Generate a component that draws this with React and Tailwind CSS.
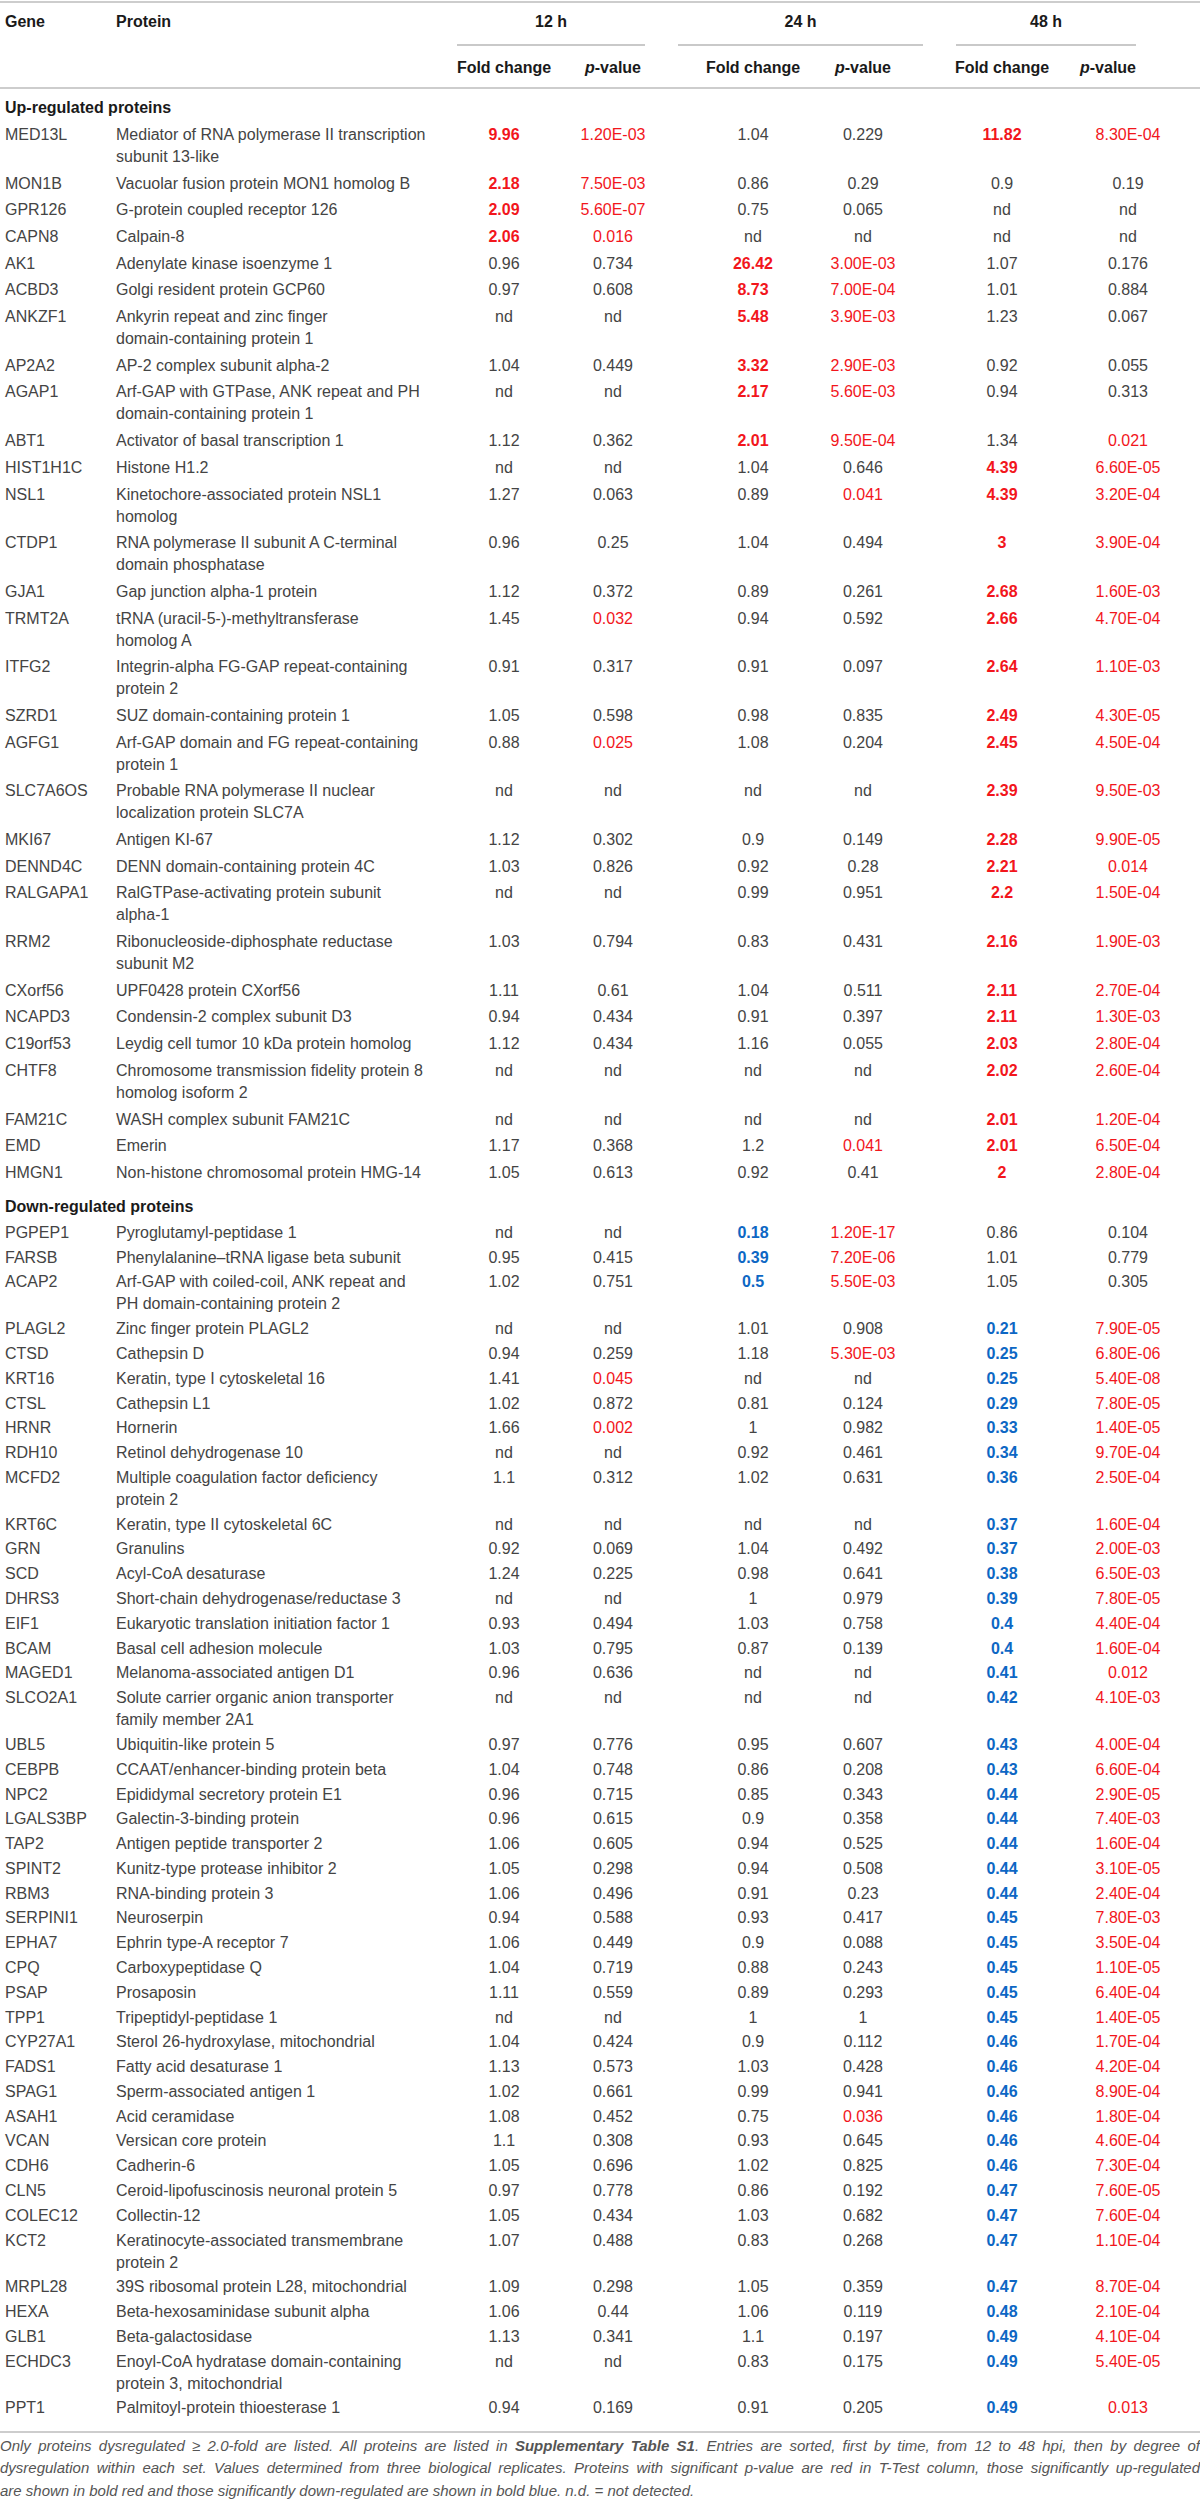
import React from 'react'

const COLS = 'grid grid-cols-[116px_334px_108px_110px_30px_110px_110px_30px_108px_144px]'

// gene|protein (~ = line break)|F12|P12|F24|P24|F48|P48
// suffix * = bold red, # = bold blue, ! = red
const UP = [
  'MED13L|Mediator of RNA polymerase II transcription~subunit 13-like|9.96*|1.20E-03!|1.04|0.229|11.82*|8.30E-04!',
  'MON1B|Vacuolar fusion protein MON1 homolog B|2.18*|7.50E-03!|0.86|0.29|0.9|0.19',
  'GPR126|G-protein coupled receptor 126|2.09*|5.60E-07!|0.75|0.065|nd|nd',
  'CAPN8|Calpain-8|2.06*|0.016!|nd|nd|nd|nd',
  'AK1|Adenylate kinase isoenzyme 1|0.96|0.734|26.42*|3.00E-03!|1.07|0.176',
  'ACBD3|Golgi resident protein GCP60|0.97|0.608|8.73*|7.00E-04!|1.01|0.884',
  'ANKZF1|Ankyrin repeat and zinc finger~domain-containing protein 1|nd|nd|5.48*|3.90E-03!|1.23|0.067',
  'AP2A2|AP-2 complex subunit alpha-2|1.04|0.449|3.32*|2.90E-03!|0.92|0.055',
  'AGAP1|Arf-GAP with GTPase, ANK repeat and PH~domain-containing protein 1|nd|nd|2.17*|5.60E-03!|0.94|0.313',
  'ABT1|Activator of basal transcription 1|1.12|0.362|2.01*|9.50E-04!|1.34|0.021!',
  'HIST1H1C|Histone H1.2|nd|nd|1.04|0.646|4.39*|6.60E-05!',
  'NSL1|Kinetochore-associated protein NSL1~homolog|1.27|0.063|0.89|0.041!|4.39*|3.20E-04!',
  'CTDP1|RNA polymerase II subunit A C-terminal~domain phosphatase|0.96|0.25|1.04|0.494|3*|3.90E-04!',
  'GJA1|Gap junction alpha-1 protein|1.12|0.372|0.89|0.261|2.68*|1.60E-03!',
  'TRMT2A|tRNA (uracil-5-)-methyltransferase~homolog A|1.45|0.032!|0.94|0.592|2.66*|4.70E-04!',
  'ITFG2|Integrin-alpha FG-GAP repeat-containing~protein 2|0.91|0.317|0.91|0.097|2.64*|1.10E-03!',
  'SZRD1|SUZ domain-containing protein 1|1.05|0.598|0.98|0.835|2.49*|4.30E-05!',
  'AGFG1|Arf-GAP domain and FG repeat-containing~protein 1|0.88|0.025!|1.08|0.204|2.45*|4.50E-04!',
  'SLC7A6OS|Probable RNA polymerase II nuclear~localization protein SLC7A|nd|nd|nd|nd|2.39*|9.50E-03!',
  'MKI67|Antigen KI-67|1.12|0.302|0.9|0.149|2.28*|9.90E-05!',
  'DENND4C|DENN domain-containing protein 4C|1.03|0.826|0.92|0.28|2.21*|0.014!',
  'RALGAPA1|RalGTPase-activating protein subunit~alpha-1|nd|nd|0.99|0.951|2.2*|1.50E-04!',
  'RRM2|Ribonucleoside-diphosphate reductase~subunit M2|1.03|0.794|0.83|0.431|2.16*|1.90E-03!',
  'CXorf56|UPF0428 protein CXorf56|1.11|0.61|1.04|0.511|2.11*|2.70E-04!',
  'NCAPD3|Condensin-2 complex subunit D3|0.94|0.434|0.91|0.397|2.11*|1.30E-03!',
  'C19orf53|Leydig cell tumor 10 kDa protein homolog|1.12|0.434|1.16|0.055|2.03*|2.80E-04!',
  'CHTF8|Chromosome transmission fidelity protein 8~homolog isoform 2|nd|nd|nd|nd|2.02*|2.60E-04!',
  'FAM21C|WASH complex subunit FAM21C|nd|nd|nd|nd|2.01*|1.20E-04!',
  'EMD|Emerin|1.17|0.368|1.2|0.041!|2.01*|6.50E-04!',
  'HMGN1|Non-histone chromosomal protein HMG-14|1.05|0.613|0.92|0.41|2*|2.80E-04!',
]

const DOWN = [
  'PGPEP1|Pyroglutamyl-peptidase 1|nd|nd|0.18#|1.20E-17!|0.86|0.104',
  'FARSB|Phenylalanine\u2013tRNA ligase beta subunit|0.95|0.415|0.39#|7.20E-06!|1.01|0.779',
  'ACAP2|Arf-GAP with coiled-coil, ANK repeat and~PH domain-containing protein 2|1.02|0.751|0.5#|5.50E-03!|1.05|0.305',
  'PLAGL2|Zinc finger protein PLAGL2|nd|nd|1.01|0.908|0.21#|7.90E-05!',
  'CTSD|Cathepsin D|0.94|0.259|1.18|5.30E-03!|0.25#|6.80E-06!',
  'KRT16|Keratin, type I cytoskeletal 16|1.41|0.045!|nd|nd|0.25#|5.40E-08!',
  'CTSL|Cathepsin L1|1.02|0.872|0.81|0.124|0.29#|7.80E-05!',
  'HRNR|Hornerin|1.66|0.002!|1|0.982|0.33#|1.40E-05!',
  'RDH10|Retinol dehydrogenase 10|nd|nd|0.92|0.461|0.34#|9.70E-04!',
  'MCFD2|Multiple coagulation factor deficiency~protein 2|1.1|0.312|1.02|0.631|0.36#|2.50E-04!',
  'KRT6C|Keratin, type II cytoskeletal 6C|nd|nd|nd|nd|0.37#|1.60E-04!',
  'GRN|Granulins|0.92|0.069|1.04|0.492|0.37#|2.00E-03!',
  'SCD|Acyl-CoA desaturase|1.24|0.225|0.98|0.641|0.38#|6.50E-03!',
  'DHRS3|Short-chain dehydrogenase/reductase 3|nd|nd|1|0.979|0.39#|7.80E-05!',
  'EIF1|Eukaryotic translation initiation factor 1|0.93|0.494|1.03|0.758|0.4#|4.40E-04!',
  'BCAM|Basal cell adhesion molecule|1.03|0.795|0.87|0.139|0.4#|1.60E-04!',
  'MAGED1|Melanoma-associated antigen D1|0.96|0.636|nd|nd|0.41#|0.012!',
  'SLCO2A1|Solute carrier organic anion transporter~family member 2A1|nd|nd|nd|nd|0.42#|4.10E-03!',
  'UBL5|Ubiquitin-like protein 5|0.97|0.776|0.95|0.607|0.43#|4.00E-04!',
  'CEBPB|CCAAT/enhancer-binding protein beta|1.04|0.748|0.86|0.208|0.43#|6.60E-04!',
  'NPC2|Epididymal secretory protein E1|0.96|0.715|0.85|0.343|0.44#|2.90E-05!',
  'LGALS3BP|Galectin-3-binding protein|0.96|0.615|0.9|0.358|0.44#|7.40E-03!',
  'TAP2|Antigen peptide transporter 2|1.06|0.605|0.94|0.525|0.44#|1.60E-04!',
  'SPINT2|Kunitz-type protease inhibitor 2|1.05|0.298|0.94|0.508|0.44#|3.10E-05!',
  'RBM3|RNA-binding protein 3|1.06|0.496|0.91|0.23|0.44#|2.40E-04!',
  'SERPINI1|Neuroserpin|0.94|0.588|0.93|0.417|0.45#|7.80E-03!',
  'EPHA7|Ephrin type-A receptor 7|1.06|0.449|0.9|0.088|0.45#|3.50E-04!',
  'CPQ|Carboxypeptidase Q|1.04|0.719|0.88|0.243|0.45#|1.10E-05!',
  'PSAP|Prosaposin|1.11|0.559|0.89|0.293|0.45#|6.40E-04!',
  'TPP1|Tripeptidyl-peptidase 1|nd|nd|1|1|0.45#|1.40E-05!',
  'CYP27A1|Sterol 26-hydroxylase, mitochondrial|1.04|0.424|0.9|0.112|0.46#|1.70E-04!',
  'FADS1|Fatty acid desaturase 1|1.13|0.573|1.03|0.428|0.46#|4.20E-04!',
  'SPAG1|Sperm-associated antigen 1|1.02|0.661|0.99|0.941|0.46#|8.90E-04!',
  'ASAH1|Acid ceramidase|1.08|0.452|0.75|0.036!|0.46#|1.80E-04!',
  'VCAN|Versican core protein|1.1|0.308|0.93|0.645|0.46#|4.60E-04!',
  'CDH6|Cadherin-6|1.05|0.696|1.02|0.825|0.46#|7.30E-04!',
  'CLN5|Ceroid-lipofuscinosis neuronal protein 5|0.97|0.778|0.86|0.192|0.47#|7.60E-05!',
  'COLEC12|Collectin-12|1.05|0.434|1.03|0.682|0.47#|7.60E-04!',
  'KCT2|Keratinocyte-associated transmembrane~protein 2|1.07|0.488|0.83|0.268|0.47#|1.10E-04!',
  'MRPL28|39S ribosomal protein L28, mitochondrial|1.09|0.298|1.05|0.359|0.47#|8.70E-04!',
  'HEXA|Beta-hexosaminidase subunit alpha|1.06|0.44|1.06|0.119|0.48#|2.10E-04!',
  'GLB1|Beta-galactosidase|1.13|0.341|1.1|0.197|0.49#|4.10E-04!',
  'ECHDC3|Enoyl-CoA hydratase domain-containing~protein 3, mitochondrial|nd|nd|0.83|0.175|0.49#|5.40E-05!',
  'PPT1|Palmitoyl-protein thioesterase 1|0.94|0.169|0.91|0.205|0.49#|0.013!',
]

function Val({ v }) {
  const mark = v.slice(-1)
  if (mark === '*') return <div className="text-center font-bold text-[#f2161c]">{v.slice(0, -1)}</div>
  if (mark === '#') return <div className="text-center font-bold text-[#0d67c4]">{v.slice(0, -1)}</div>
  if (mark === '!') return <div className="text-center text-[#f2161c]">{v.slice(0, -1)}</div>
  return <div className="text-center">{v}</div>
}

function Row({ d, pad }) {
  const [gene, protein, ...v] = d.split('|')
  return (
    <div className={`${COLS} ${pad}`}>
      <div className="pl-[5px]">{gene}</div>
      <div className="whitespace-nowrap">
        {protein.split('~').map((line, i) => (
          <div key={i}>{line}</div>
        ))}
      </div>
      <Val v={v[0]} />
      <Val v={v[1]} />
      <div />
      <Val v={v[2]} />
      <Val v={v[3]} />
      <div />
      <Val v={v[4]} />
      <Val v={v[5]} />
    </div>
  )
}

const PV = () => (
  <>
    <i>p</i>-value
  </>
)

export default function App() {
  return (
    <div className="w-[1200px] bg-white font-['Liberation_Sans',Arial,sans-serif] text-[16px] leading-[22px] text-[#444]">
      <div className="mt-[1px] h-[2px] bg-[#cdcdcd]" />

      {/* header */}
      <div className="flex font-bold text-[#1a1a1a]">
        <div className="w-[116px] pl-[5px] pt-[8px]">Gene</div>
        <div className="w-[341px] pt-[8px]">Protein</div>
        <div className="w-[188px] border-b-2 border-[#c9c9c9] pt-[8px] pb-[11px] text-center">12 h</div>
        <div className="ml-[33px] w-[245px] border-b-2 border-[#c9c9c9] pt-[8px] pb-[11px] text-center">24 h</div>
        <div className="ml-[33px] w-[180px] border-b-2 border-[#c9c9c9] pt-[8px] pb-[11px] text-center">48 h</div>
      </div>
      <div className={`${COLS} border-b-2 border-[#cdcdcd] pt-[11px] pb-[8px] font-bold text-[#1a1a1a]`}>
        <div />
        <div />
        <div className="text-center">Fold change</div>
        <div className="text-center"><PV /></div>
        <div />
        <div className="text-center">Fold change</div>
        <div className="text-center"><PV /></div>
        <div />
        <div className="text-center">Fold change</div>
        <div className="pr-[40px] text-center"><PV /></div>
      </div>

      {/* body */}
      <div className="pl-[5px] pt-[8px] pb-[2.65px] font-bold text-[#1a1a1a]">Up-regulated proteins</div>
      {UP.map((d) => (
        <Row key={d} d={d} pad="py-[2.35px]" />
      ))}
      <div className="pl-[5px] pt-[9.65px] pb-[2.6px] font-bold text-[#1a1a1a]">Down-regulated proteins</div>
      {DOWN.map((d) => (
        <Row key={d} d={d} pad="py-[1.4px]" />
      ))}

      <div className="mt-[10px] h-[2px] bg-[#cdcdcd]" />

      {/* footnote */}
      <div className="mt-[2px] text-[15px] italic leading-[22.5px] text-[#555]">
        <div className="whitespace-nowrap text-justify [text-align-last:justify]">
          Only proteins dysregulated ≥ 2.0-fold are listed. All proteins are listed in{' '}
          <b>Supplementary Table S1</b>. Entries are sorted, first by time, from 12 to 48 hpi, then by degree of
        </div>
        <div className="whitespace-nowrap text-justify [text-align-last:justify]">
          dysregulation within each set. Values determined from three biological replicates. Proteins with significant
          p-value are red in T-Test column, those significantly up-regulated
        </div>
        <div className="whitespace-nowrap">
          are shown in bold red and those significantly down-regulated are shown in bold blue. n.d. = not detected.
        </div>
      </div>
    </div>
  )
}
